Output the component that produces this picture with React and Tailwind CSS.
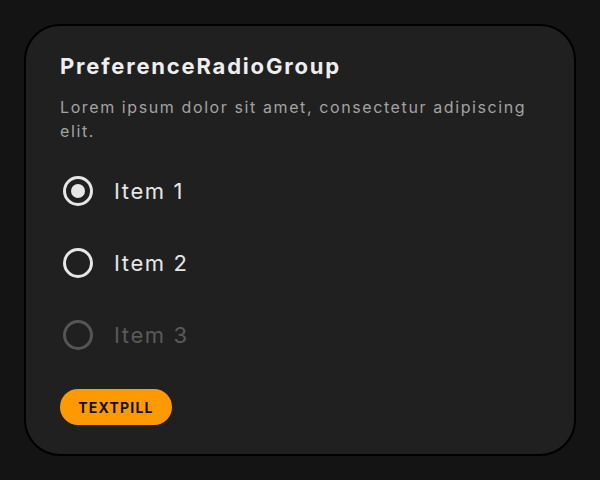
import React from "react";

const items = [
  { label: "Item 1", checked: true, disabled: false },
  { label: "Item 2", checked: false, disabled: false },
  { label: "Item 3", checked: false, disabled: true },
];

const Radio = ({ checked, disabled }) => (
  <span
    className={`w-[30px] h-[30px] rounded-full border-[3px] flex items-center justify-center shrink-0 ${
      disabled ? "border-[#555555]" : "border-[#e6e6e6]"
    }`}
  >
    {checked && <span className="w-[14px] h-[14px] rounded-full bg-[#e6e6e6]"></span>}
  </span>
);

export default function App() {
  return (
    <div
      className="w-[600px] h-[480px] bg-[#141414] p-6"
      style={{ fontFamily: "Inter, 'Noto Sans', sans-serif" }}
    >
      <div className="w-full h-full bg-[#202020] border-2 border-black rounded-[36px] px-[34px] pt-[26px] pb-[28px] flex flex-col">
        <h1 className="text-[22px] leading-[28px] font-bold text-[#eeeeee] tracking-[1.8px]">
          PreferenceRadioGroup
        </h1>
        <p className="mt-[15px] text-[16px] leading-[24px] text-[#a3a3a3] tracking-[1.6px]">
          Lorem ipsum dolor sit amet, consectetur adipiscing elit.
        </p>
        <div className="mt-6 flex flex-col gap-6">
          {items.map((it) => (
            <label key={it.label} className="h-12 flex items-center gap-[21px] pl-[3px]">
              <Radio checked={it.checked} disabled={it.disabled} />
              <span
                className={`text-[22px] tracking-[1.6px] ${
                  it.disabled ? "text-[#5a5a5a]" : "text-[#e6e6e6]"
                }`}
              >
                {it.label}
              </span>
            </label>
          ))}
        </div>
        <div className="mt-[30px]">
          <span className="inline-flex items-center justify-center w-[112px] h-9 rounded-full bg-[#ff9900] text-[14px] font-bold tracking-[1.2px] text-[#111111]">
            TEXTPILL
          </span>
        </div>
      </div>
    </div>
  );
}
